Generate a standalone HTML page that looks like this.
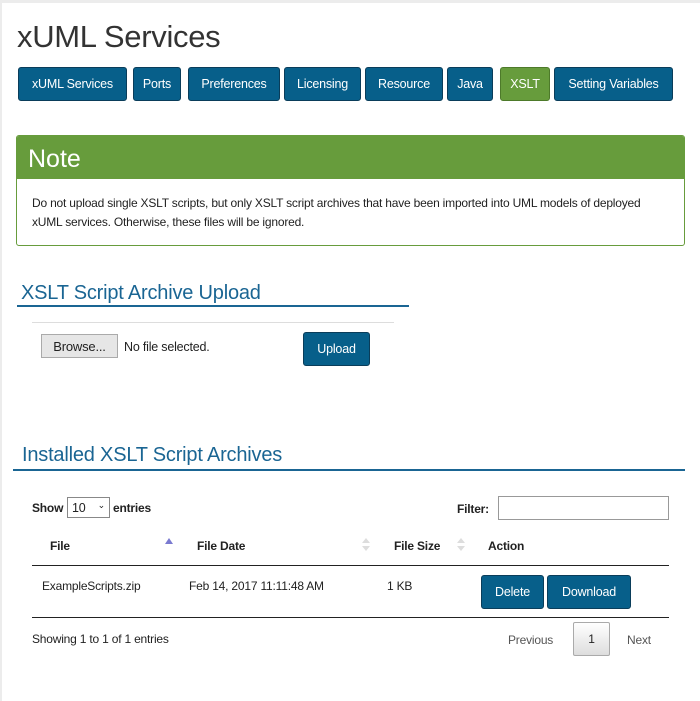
<!DOCTYPE html>
<html><head><meta charset="utf-8"><style>
*{margin:0;padding:0;box-sizing:border-box}
body{width:700px;height:701px;background:#fff;position:relative;overflow:hidden;font-family:"Liberation Sans",sans-serif;color:#222}
.a{position:absolute;white-space:nowrap}
.topbar{left:0;top:0;width:700px;height:3px;background:#ececec}
.lbar{left:0;top:0;width:2px;height:701px;background:#ececec}
.btn{position:absolute;background:#075f8a;border:1px solid #0a3d5a;border-radius:3px;color:#fff;font-size:12.5px;display:flex;align-items:center;justify-content:center;letter-spacing:-0.2px}
.g{background:#679c3c;border-color:#4d7a2a}
.h2{color:#1a6593;font-size:20px;letter-spacing:-0.2px}
.t{font-size:12px;letter-spacing:-0.2px}
.b{font-weight:bold}
.arr{position:absolute;width:0;height:0;border-left:4px solid transparent;border-right:4px solid transparent}
</style></head><body>
<div class="a topbar"></div><div class="a lbar"></div>
<div class="a" style="left:17px;top:19px;font-size:31px;color:#333;letter-spacing:-0.3px">xUML Services</div>
<div class="btn" style="left:18px;top:67px;width:109px;height:34px">xUML Services</div>
<div class="btn" style="left:133px;top:67px;width:48px;height:34px">Ports</div>
<div class="btn" style="left:188px;top:67px;width:92px;height:34px">Preferences</div>
<div class="btn" style="left:284px;top:67px;width:77px;height:34px">Licensing</div>
<div class="btn" style="left:365px;top:67px;width:78px;height:34px">Resource</div>
<div class="btn" style="left:447px;top:67px;width:46px;height:34px">Java</div>
<div class="btn g" style="left:500px;top:67px;width:50px;height:34px">XSLT</div>
<div class="btn" style="left:554px;top:67px;width:119px;height:34px">Setting Variables</div>

<div class="a" style="left:16px;top:135px;width:669px;height:111px;border:1px solid #679c3c;border-radius:3px;overflow:hidden">
 <div style="background:#679c3c;height:43px;color:#fff;font-size:25px;padding:9px 0 0 11px">Note</div>
 <div class="t" style="padding:15px 0 0 15px;width:640px;line-height:19px;white-space:normal;color:#222">Do not upload single XSLT scripts, but only XSLT script archives that have been imported into UML models of deployed xUML services. Otherwise, these files will be ignored.</div>
</div>

<div class="a h2" style="left:21px;top:282px">XSLT Script Archive Upload</div>
<div class="a" style="left:17px;top:305px;width:392px;height:2px;background:#1a6593"></div>
<div class="a" style="left:32px;top:322px;width:362px;height:1px;background:#ddd"></div>
<div class="a t" style="left:41px;top:334px;width:77px;height:24px;background:#e6e6e6;border:1px solid #aaa;display:flex;align-items:center;justify-content:center;font-size:13px">Browse...</div>
<div class="a t" style="left:124px;top:340px;font-size:12.5px">No file selected.</div>
<div class="btn" style="left:303px;top:332px;width:67px;height:34px">Upload</div>

<div class="a h2" style="left:22px;top:444px">Installed XSLT Script Archives</div>
<div class="a" style="left:13px;top:469px;width:672px;height:2px;background:#1a6593"></div>

<div class="a t b" style="left:32px;top:501px">Show</div>
<div class="a t" style="left:67px;top:497px;width:43px;height:21px;border:1px solid #888;padding:3px 0 0 4px;font-size:12.5px">10 <span style="position:absolute;right:4px;top:2px;font-size:9px">&#8964;</span></div>
<div class="a t b" style="left:113px;top:501px">entries</div>
<div class="a t b" style="left:457px;top:502px">Filter:</div>
<div class="a" style="left:498px;top:496px;width:171px;height:24px;border:1px solid #999"></div>

<div class="a t b" style="left:50px;top:539px">File</div>
<div class="arr" style="left:165px;top:538px;border-bottom:6px solid #7a7ad0"></div>
<div class="a t b" style="left:197px;top:539px">File Date</div>
<div class="arr" style="left:362px;top:538px;border-bottom:5px solid #ddd"></div><div class="arr" style="left:362px;top:546px;border-top:5px solid #ddd"></div>
<div class="a t b" style="left:394px;top:539px">File Size</div>
<div class="arr" style="left:457px;top:538px;border-bottom:5px solid #ddd"></div><div class="arr" style="left:457px;top:546px;border-top:5px solid #ddd"></div>
<div class="a t b" style="left:488px;top:539px">Action</div>
<div class="a" style="left:32px;top:565px;width:637px;height:1px;background:#222"></div>
<div class="a t" style="left:42px;top:579px">ExampleScripts.zip</div>
<div class="a t" style="left:189px;top:579px">Feb 14, 2017 11:11:48 AM</div>
<div class="a t" style="left:387px;top:579px">1 KB</div>
<div class="btn" style="left:481px;top:575px;width:63px;height:34px">Delete</div>
<div class="btn" style="left:547px;top:575px;width:84px;height:34px">Download</div>
<div class="a" style="left:32px;top:617px;width:637px;height:1px;background:#222"></div>
<div class="a t" style="left:32px;top:632px">Showing 1 to 1 of 1 entries</div>
<div class="a t" style="left:508px;top:633px;color:#555">Previous</div>
<div class="a t" style="left:573px;top:622px;width:37px;height:34px;border:1px solid #aaa;border-radius:2px;background:linear-gradient(#fff,#ddd);display:flex;align-items:center;justify-content:center">1</div>
<div class="a t" style="left:627px;top:633px;color:#555">Next</div>
</body></html>
